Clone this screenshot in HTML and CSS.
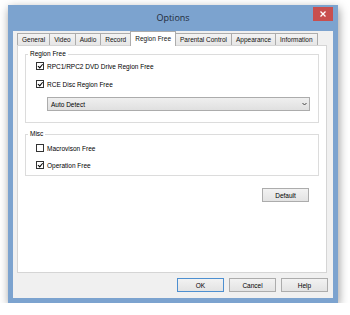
FILE: index.html
```html
<!DOCTYPE html>
<html lang="en">
<head>
  <meta charset="UTF-8" />
  <title>Options</title>
  <link rel="stylesheet" href="styles.css">
</head>
<body>
  <div class="window">
    <div class="titlebar">
      <span></span>
      <span class="title">Options</span>
      <button class="close-btn" type="button">
        <svg width="6" height="6" viewBox="0 0 6 6"><path d="M0.5 0.5 L5.5 5.5 M5.5 0.5 L0.5 5.5" stroke="#fff" stroke-width="1.3"/></svg>
      </button>
    </div>

    <div class="client">
      <div class="tabs">
        <span class="tab">General</span>
        <span class="tab">Video</span>
        <span class="tab">Audio</span>
        <span class="tab">Record</span>
        <span class="tab active">Region Free</span>
        <span class="tab">Parental Control</span>
        <span class="tab">Appearance</span>
        <span class="tab last">Information</span>
      </div>

      <div class="panel">
        <fieldset class="group group-region">
          <legend>Region Free</legend>
          <label class="check">
            <span class="box checked"></span>
            RPC1/RPC2 DVD Drive Region Free
          </label>
          <label class="check">
            <span class="box checked"></span>
            RCE Disc Region Free
          </label>
          <div class="select">
            <span>Auto Detect</span>
            <svg width="5" height="4" viewBox="0 0 5 4"><path d="M0.5 1 L2.5 3 L4.5 1" stroke="#444" stroke-width="1" fill="none"/></svg>
          </div>
        </fieldset>

        <fieldset class="group group-misc">
          <legend>Misc</legend>
          <label class="check">
            <span class="box"></span>
            Macrovison Free
          </label>
          <label class="check">
            <span class="box checked"></span>
            Operation Free
          </label>
        </fieldset>

        <div class="panel-actions">
          <button class="btn" type="button">Default</button>
        </div>
      </div>

      <div class="footer">
        <button class="btn default" type="button">OK</button>
        <button class="btn" type="button">Cancel</button>
        <button class="btn" type="button">Help</button>
      </div>
    </div>
  </div>
</body>
</html>
```

FILE: styles.css
```css
* {
  box-sizing: border-box;
  margin: 0;
  padding: 0;
}
body {
  background: #fff;
  font-family: 'Liberation Sans', Arial, sans-serif;
  font-size: 6.5px;
  color: #000;
}
.window {
  margin: 5px 0 0 8px;
  width: 330px;
  height: 298px;
  background: #7ca3cf;
  padding: 0 5px 5px;
  box-shadow: 1px 3px 9px rgba(0, 0, 0, 0.4);
}
.titlebar {
  height: 26px;
  display: grid;
  grid-template-columns: 1fr auto 1fr;
  align-items: center;
}
.title {
  font-family: 'Open Sans', 'Liberation Sans', sans-serif;
  font-size: 9px;
  color: #1e2a3a;
  margin-top: -2px;
}
.close-btn {
  justify-self: end;
  align-self: start;
  margin-top: 2px;
  width: 20px;
  height: 14px;
  background: #c84f4f;
  border: none;
  display: flex;
  align-items: center;
  justify-content: center;
}
.client {
  height: 267px;
  background: #f0f0f0;
  padding: 2px 5px 0 4px;
}
.tabs {
  display: flex;
  height: 12px;
}
.tab {
  height: 12px;
  line-height: 11px;
  padding: 0 4px;
  border: 1px solid #acacac;
  border-right: none;
  border-bottom: none;
  background: linear-gradient(#f3f3f3, #e6e6e6);
  color: #111;
}
.tab.last {
  border-right: 1px solid #acacac;
}
.tab.active {
  height: 15px;
  margin-top: -2px;
  line-height: 13px;
  background: #fff;
  border-right: 1px solid #acacac;
  margin-right: -1px;
  position: relative;
  z-index: 1;
}
.tab.active + .tab {
  border-left: none;
  padding-left: 5px;
}
.panel {
  height: 228px;
  margin-right: 1px;
  background: #fff;
  border: 1px solid #d5d5d5;
  padding: 4px 7px 0;
}
.group {
  border: 1px solid #dcdcdc;
  padding: 3px 8px 0 10px;
  display: flex;
  flex-direction: column;
}
.group legend {
  line-height: 8px;
  margin-left: -8px;
  padding: 0 2px;
}
.group-region {
  height: 73px;
  gap: 8px;
}
.group-misc {
  margin-top: 7px;
  height: 46px;
  padding-top: 5px;
  gap: 7px;
}
.check {
  display: flex;
  align-items: center;
  gap: 3px;
  height: 10px;
}
.box {
  width: 8px;
  height: 8px;
  border: 1px solid #333;
  background: #fff;
  position: relative;
}
.box.checked::after {
  content: "";
  position: absolute;
  left: 1px;
  top: 0px;
  width: 2px;
  height: 4px;
  border: solid #000;
  border-width: 0 1.3px 1.3px 0;
  transform: translate(0.8px, 0) rotate(40deg);
}
.select {
  margin-left: 11px;
  height: 14px;
  border: 1px solid #acacac;
  background: linear-gradient(#efefef, #e0e0e0);
  display: flex;
  align-items: center;
  justify-content: space-between;
  padding: 0 2px 0 3px;
}
.panel-actions {
  display: flex;
  justify-content: flex-end;
  margin-top: 12px;
  padding-right: 10px;
}
.btn {
  width: 47px;
  height: 14px;
  border: 1px solid #acacac;
  background: linear-gradient(#f2f2f2, #e3e3e3);
  font-family: 'Liberation Sans', Arial, sans-serif;
  font-size: 6.5px;
  color: #000;
}
.btn.default {
  border-color: #4d8fd0;
}
.footer {
  display: flex;
  justify-content: flex-end;
  gap: 5px;
  margin-top: 5px;
}
```
